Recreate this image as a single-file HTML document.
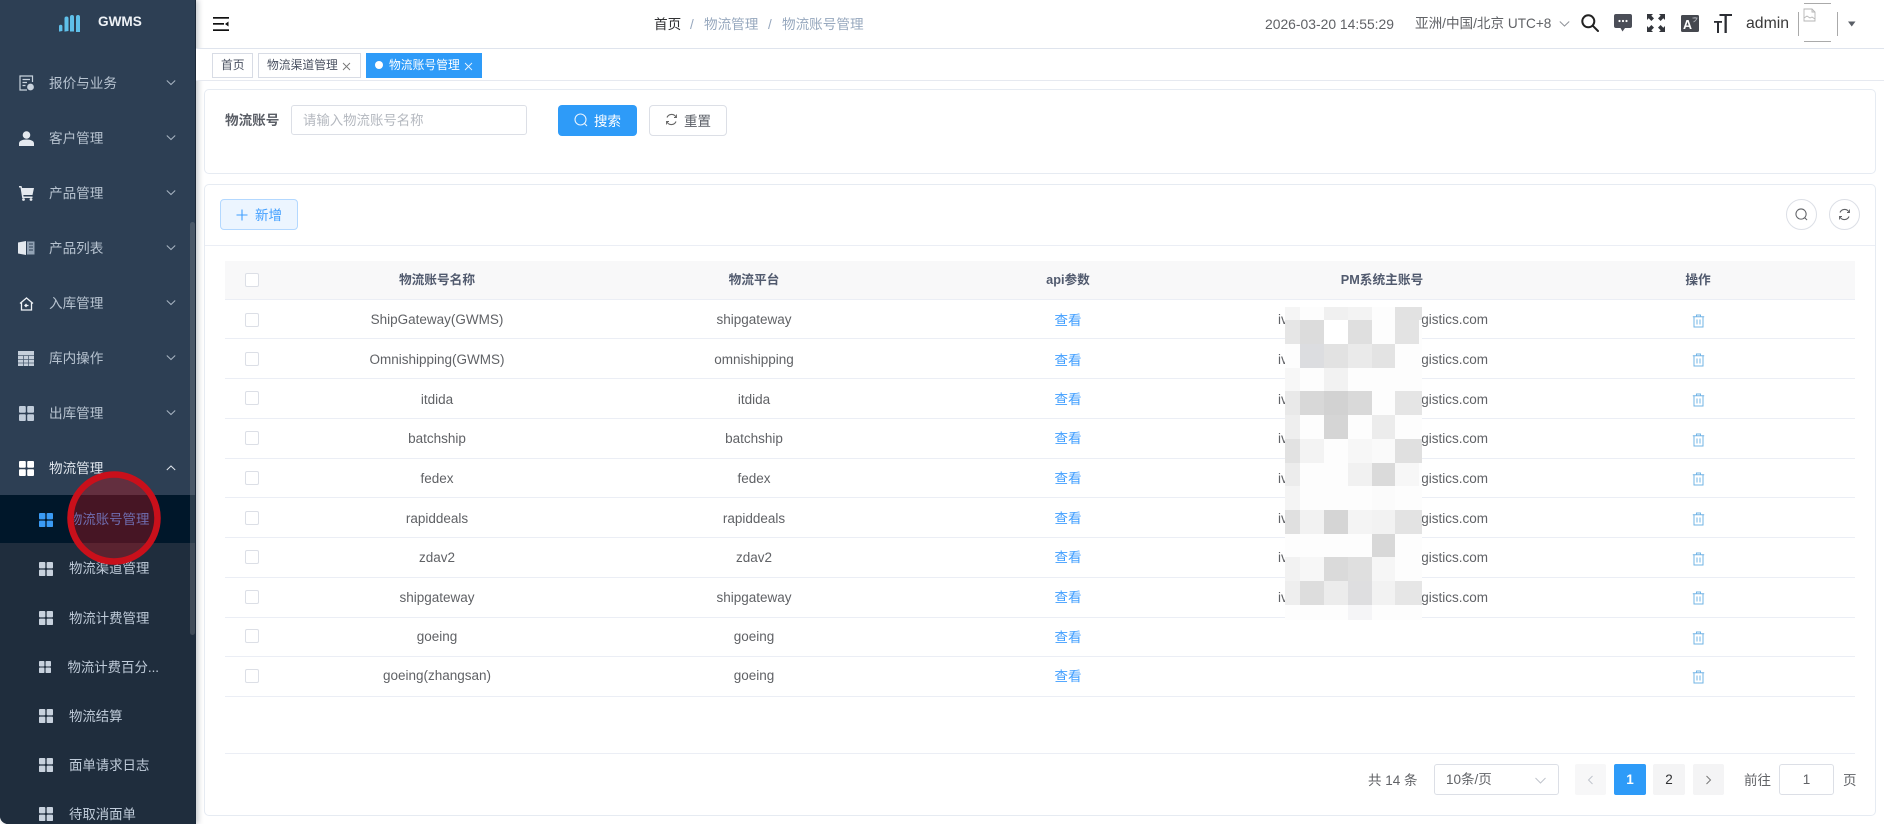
<!DOCTYPE html>
<html lang="zh"><head><meta charset="utf-8"><title>物流账号管理</title>
<style>
*{box-sizing:border-box}
html{background:#fff}
html,body{margin:0;padding:0;width:1884px;height:824px;overflow:hidden;font-family:"Liberation Sans","Noto Sans CJK SC",sans-serif;color:#606266}
body{background:#fff;filter:blur(.35px)}
.a{position:absolute;white-space:nowrap}
#side{position:absolute;left:0;top:0;width:196px;height:824px;background:#2d3f54;border-bottom-left-radius:8px;overflow:hidden;box-shadow:2px 0 6px rgba(0,21,41,.25)}
#nav{position:absolute;left:0;top:1px;width:196px;height:824px}
.m{position:absolute;left:49px;font-size:13.6px;line-height:20px;color:#b7c3d0}
.s{position:absolute;left:69px;font-size:13.4px;line-height:20px;color:#bfcbd9}
.ic{position:absolute}
.card{position:absolute;left:204px;width:1672px;background:#fff;border:1px solid #e6ebf2;border-radius:5px}
.tag{position:absolute;top:53px;height:25px;background:#fff;border:1px solid #d8dce5;font-size:11.8px;line-height:23px;color:#495060}
.row{position:absolute;left:225px;width:1630px;height:1px;background:#ebeef5}
.cb{position:absolute;left:245px;width:14px;height:14px;border:1px solid #dcdfe6;border-radius:2px;background:#fff}
.c{position:absolute;line-height:20px;font-size:13.5px;color:#606266;text-align:center;white-space:nowrap}
.n{left:287px;width:300px}.p{left:604px;width:300px}.v{left:1018px;width:100px;color:#409eff}
.th{position:absolute;top:270px;line-height:20px;font-size:12.7px;font-weight:bold;color:#515a6e;text-align:center;white-space:nowrap}
.pg{position:absolute;top:764px;height:31px;border-radius:2px;background:#f4f4f5;text-align:center;line-height:31px;font-size:13.5px;color:#606266}
</style></head><body>

<div id="side">
<div class="a" style="left:0;top:543px;width:196px;height:281px;background:#1f2d3d"></div>
<div class="a" style="left:0;top:495px;width:196px;height:48px;background:#00172a"></div>
<div class="a" style="left:195px;top:0;width:1px;height:824px;background:#1b2838"></div>

<svg class="ic" style="left:59px;top:15px" width="22" height="17" viewBox="0 0 22 17"><g fill="#5fc0ea"><path d="M0 11.500a1.700 1.700 0 0 1 3.400 0V16l-3.400.6z"/><path d="M5.500 3.500a2 2 0 0 1 4 0V16l-4 .6z"/><path d="M11 2a2 2 0 0 1 4 0V16.500h-4z"/><path d="M17 2a2 2 0 0 1 4 0V17h-4z"/></g></svg>
<div class="a" style="left:98px;top:12px;line-height:20px;font-size:13.6px;font-weight:bold;color:#eef2f6">GWMS</div>

<div id="nav">
<svg class="ic" style="left:19px;top:74px" width="15" height="16" viewBox="0 0 15 16" fill="none" stroke="#c9d3de" stroke-width="1.2"><path d="M13.5 7V1H1v14h7"/><path d="M3.5 4.5h7.5M3.5 7.5h4.500M3.5 10.5h3"/><circle cx="11.5" cy="12" r="2.8" fill="#c9d3de"/></svg>
<div class="m" style="top:73px">报价与业务</div>

<svg class="ic" style="left:19px;top:130px" width="15" height="15" viewBox="0 0 15 15" fill="#e4e9ef"><circle cx="7.5" cy="4" r="3.8"/><path d="M0 15v-2.5C0 10 3 8.5 7.5 8.5S15 10 15 12.5V15z"/></svg>
<div class="m" style="top:128px">客户管理</div>

<svg class="ic" style="left:19px;top:185px" width="15" height="15" viewBox="0 0 15 15" fill="#e4e9ef"><path d="M0 0h2.5l.6 2H15l-1.5 7H4.300l.3 1.500H13.500V12H3.200L1.500 1.500H0z"/><circle cx="4.500" cy="13.500" r="1.400"/><circle cx="12" cy="13.500" r="1.400"/></svg>
<div class="m" style="top:183px">产品管理</div>

<svg class="ic" style="left:18px;top:240px" width="17" height="14" viewBox="0 0 17 14"><path d="M0 1.500L8 0v14L0 12.500z" fill="#e4e9ef"/><path d="M9 0.500h7.500v13H9z" fill="#93a3b5"/><path d="M11 3h4M11 6h4M11 9h4" stroke="#2d3f54"/></svg>
<div class="m" style="top:238px">产品列表</div>

<svg class="ic" style="left:19px;top:296px" width="15" height="14" viewBox="0 0 15 14" fill="none" stroke="#eef2f6" stroke-width="1.300"><path d="M1 6.500L7.500 1 14 6.500"/><path d="M2.500 5.500V13h10V5.500"/><path d="M9.500 8.500H6M7.500 7L6 8.500 7.500 10"/></svg>
<div class="m" style="top:293px">入库管理</div>

<svg class="ic" style="left:18px;top:350px" width="16" height="15" viewBox="0 0 16 15"><rect width="16" height="15" fill="#c5cfdb"/><path d="M0 4.500h16M0 8.500h16M0 12h16M5.500 4.500V15M10.500 4.500V15" stroke="#4b5d72" stroke-width=".8"/></svg>
<div class="m" style="top:348px">库内操作</div>

<svg class="ic" style="left:19px;top:405px" width="15" height="15" viewBox="0 0 15 15" fill="#c0ccda"><rect width="6.800" height="6.800" rx="1"/><rect x="8.200" width="6.800" height="6.800" rx="1"/><rect y="8.200" width="6.800" height="6.800" rx="1"/><rect x="8.200" y="8.200" width="6.800" height="6.800" rx="1"/></svg>
<div class="m" style="top:403px">出库管理</div>

<svg class="ic" style="left:19px;top:460px" width="15" height="15" viewBox="0 0 15 15" fill="#fff"><rect width="6.800" height="6.800" rx="1"/><rect x="8.200" width="6.800" height="6.800" rx="1"/><rect y="8.200" width="6.800" height="6.800" rx="1"/><rect x="8.200" y="8.200" width="6.800" height="6.800" rx="1"/></svg>
<div class="m" style="top:458px;color:#dfe5ec">物流管理</div>

<svg class="ic" style="left:166px;top:78px" width="10" height="8" viewBox="0 0 10 8" fill="none" stroke="#a8b5c3"><path d="M.8 1.500L5 5.500 9.200 1.500"/></svg>
<svg class="ic" style="left:166px;top:133px" width="10" height="8" viewBox="0 0 10 8" fill="none" stroke="#a8b5c3"><path d="M.8 1.500L5 5.500 9.200 1.500"/></svg>
<svg class="ic" style="left:166px;top:188px" width="10" height="8" viewBox="0 0 10 8" fill="none" stroke="#a8b5c3"><path d="M.8 1.500L5 5.500 9.200 1.500"/></svg>
<svg class="ic" style="left:166px;top:243px" width="10" height="8" viewBox="0 0 10 8" fill="none" stroke="#a8b5c3"><path d="M.8 1.500L5 5.500 9.200 1.500"/></svg>
<svg class="ic" style="left:166px;top:298px" width="10" height="8" viewBox="0 0 10 8" fill="none" stroke="#a8b5c3"><path d="M.8 1.500L5 5.500 9.200 1.500"/></svg>
<svg class="ic" style="left:166px;top:353px" width="10" height="8" viewBox="0 0 10 8" fill="none" stroke="#a8b5c3"><path d="M.8 1.500L5 5.500 9.200 1.500"/></svg>
<svg class="ic" style="left:166px;top:408px" width="10" height="8" viewBox="0 0 10 8" fill="none" stroke="#a8b5c3"><path d="M.8 1.500L5 5.500 9.200 1.500"/></svg>
<svg class="ic" style="left:166px;top:463px" width="10" height="8" viewBox="0 0 10 8" fill="none" stroke="#dfe5ec"><path d="M.8 6L5 2 9.200 6"/></svg>

<svg class="ic" style="left:39px;top:512px" width="14" height="14" viewBox="0 0 15 15" fill="#3a9bf4"><rect width="6.800" height="6.800" rx="1"/><rect x="8.200" width="6.800" height="6.800" rx="1"/><rect y="8.200" width="6.800" height="6.800" rx="1"/><rect x="8.200" y="8.200" width="6.800" height="6.800" rx="1"/></svg>
<div class="s" style="top:509px;color:#409eff">物流账号管理</div>

<svg class="ic" style="left:39px;top:561px" width="14" height="14" viewBox="0 0 15 15" fill="#c8d2de"><rect width="6.800" height="6.800" rx="1"/><rect x="8.200" width="6.800" height="6.800" rx="1"/><rect y="8.200" width="6.800" height="6.800" rx="1"/><rect x="8.200" y="8.200" width="6.800" height="6.800" rx="1"/></svg>
<div class="s" style="top:558px">物流渠道管理</div>

<svg class="ic" style="left:39px;top:610px" width="14" height="14" viewBox="0 0 15 15" fill="#c8d2de"><rect width="6.800" height="6.800" rx="1"/><rect x="8.200" width="6.800" height="6.800" rx="1"/><rect y="8.200" width="6.800" height="6.800" rx="1"/><rect x="8.200" y="8.200" width="6.800" height="6.800" rx="1"/></svg>
<div class="s" style="top:608px">物流计费管理</div>

<svg class="ic" style="left:39px;top:660px" width="12" height="12" viewBox="0 0 15 15" fill="#c8d2de"><rect width="6.800" height="6.800" rx="1"/><rect x="8.200" width="6.800" height="6.800" rx="1"/><rect y="8.200" width="6.800" height="6.800" rx="1"/><rect x="8.200" y="8.200" width="6.800" height="6.800" rx="1"/></svg>
<div class="s" style="top:657px;left:67.500px">物流计费百分...</div>

<svg class="ic" style="left:39px;top:708px" width="14" height="14" viewBox="0 0 15 15" fill="#c8d2de"><rect width="6.800" height="6.800" rx="1"/><rect x="8.200" width="6.800" height="6.800" rx="1"/><rect y="8.200" width="6.800" height="6.800" rx="1"/><rect x="8.200" y="8.200" width="6.800" height="6.800" rx="1"/></svg>
<div class="s" style="top:706px">物流结算</div>

<svg class="ic" style="left:39px;top:757px" width="14" height="14" viewBox="0 0 15 15" fill="#c8d2de"><rect width="6.800" height="6.800" rx="1"/><rect x="8.200" width="6.800" height="6.800" rx="1"/><rect y="8.200" width="6.800" height="6.800" rx="1"/><rect x="8.200" y="8.200" width="6.800" height="6.800" rx="1"/></svg>
<div class="s" style="top:755px">面单请求日志</div>

<svg class="ic" style="left:39px;top:806px" width="14" height="14" viewBox="0 0 15 15" fill="#c8d2de"><rect width="6.800" height="6.800" rx="1"/><rect x="8.200" width="6.800" height="6.800" rx="1"/><rect y="8.200" width="6.800" height="6.800" rx="1"/><rect x="8.200" y="8.200" width="6.800" height="6.800" rx="1"/></svg>
<div class="s" style="top:804px">待取消面单</div>
</div>

<div class="a" style="left:190px;top:222px;width:5px;height:413px;background:rgba(144,147,153,.3);border-radius:3px"></div>
</div>

<!-- header -->
<svg class="ic" style="left:213px;top:17px" width="16" height="14" viewBox="0 0 16 14"><rect width="16" height="1.700" fill="#111"/><rect y="6" width="11" height="1.700" fill="#111"/><rect y="12.300" width="16" height="1.700" fill="#111"/><path d="M15.500 4.500v5L12 7z" fill="#111"/></svg>
<div class="a" style="left:654px;top:15px;line-height:20px;font-size:13.6px;color:#303133">首页</div>
<div class="a" style="left:690px;top:15px;line-height:20px;font-size:13.6px;color:#97a8be">/</div>
<div class="a" style="left:704px;top:15px;line-height:20px;font-size:13.6px;color:#97a8be">物流管理</div>
<div class="a" style="left:768px;top:15px;line-height:20px;font-size:13.6px;color:#97a8be">/</div>
<div class="a" style="left:782px;top:15px;line-height:20px;font-size:13.6px;color:#97a8be">物流账号管理</div>

<div class="a" style="left:1265px;top:14px;line-height:20px;font-size:13.900px;color:#606266">2026-03-20 14:55:29</div>
<div class="a" style="left:1415px;top:14px;line-height:20px;font-size:13.600px;color:#606266">亚洲/中国/北京 UTC+8</div>
<svg class="ic" style="left:1559px;top:20px" width="11" height="8" viewBox="0 0 11 8" fill="none" stroke="#909399"><path d="M.8 1.500L5.500 6 10.200 1.500"/></svg>

<svg class="ic" style="left:1581px;top:14px" width="18" height="18" viewBox="0 0 18 18" fill="none" stroke="#222" stroke-width="2"><circle cx="7.300" cy="7.300" r="6"/><path d="M11.700 11.700L17 17" stroke-linecap="round"/></svg>
<svg class="ic" style="left:1614px;top:14px" width="18" height="18" viewBox="0 0 18 18"><path d="M2 0h14a2 2 0 0 1 2 2v10a2 2 0 0 1-2 2h-5l-2.500 3.500L6.500 14H2a2 2 0 0 1-2-2V2a2 2 0 0 1 2-2z" fill="#4b4e58"/><circle cx="5.500" cy="7" r="1.100" fill="#fff"/><circle cx="9" cy="7" r="1.100" fill="#fff"/><circle cx="12.500" cy="7" r="1.100" fill="#fff"/></svg>
<svg class="ic" style="left:1647px;top:14px" width="18" height="18" viewBox="0 0 18 18" fill="#33363c"><path d="M0 0h6L4.300 1.700 7 4.400 4.400 7 1.700 4.300 0 6zM18 0v6l-1.700-1.700L13.600 7 11 4.400l2.700-2.700L12 0zM0 18v-6l1.700 1.700L4.400 11 7 13.600l-2.700 2.700L6 18zM18 18h-6l1.700-1.700L11 13.600l2.600-2.600 2.700 2.700L18 12z"/></svg>
<svg class="ic" style="left:1681px;top:15px" width="18" height="17" viewBox="0 0 18 17"><rect width="18" height="17" rx="1.500" fill="#45484f"/><text x="2" y="14" font-size="12.500" font-weight="bold" fill="#fff" font-family="Liberation Sans">A</text><path d="M11.500 3h5M14 2v1M12.500 7c2 -1 3 -2.500 3.500 -4" stroke="#a9acb3" stroke-width=".9" fill="none"/></svg>
<svg class="ic" style="left:1714px;top:14px" width="18" height="19" viewBox="0 0 18 19" fill="#2b2d33"><rect x="5.500" y="0" width="12.500" height="2"/><rect x="10.500" y="0" width="2.300" height="19"/><rect x="0" y="7" width="8" height="1.800"/><rect x="3" y="7" width="2" height="12"/></svg>
<div class="a" style="left:1746px;top:14px;line-height:20px;font-size:15.800px;color:#3a3a3a">admin</div>
<div class="a" style="left:1798px;top:12px;width:1px;height:24px;background:#aaa"></div>
<div class="a" style="left:1837px;top:12px;width:1px;height:24px;background:#aaa"></div>
<div class="a" style="left:1804px;top:3px;width:27px;height:1px;background:#aaa"></div>
<div class="a" style="left:1804px;top:41px;width:27px;height:1px;background:#aaa"></div>
<svg class="ic" style="left:1803px;top:8px" width="13" height="14" viewBox="0 0 13 14" fill="none" stroke="#b5b5b5" stroke-width=".9"><path d="M1 1h8l3 3v9H1z"/><path d="M9 1v3h3M1 10l3-2 3 2 2-1 3 2"/></svg>
<svg class="ic" style="left:1848px;top:21px" width="8" height="6" viewBox="0 0 8 6"><path d="M0 .5h7.500L3.750 5.500z" fill="#5a5e66"/></svg>

<div class="a" style="left:196px;top:48px;width:1688px;height:33px;background:#fff;border-top:1px solid #dfe4ed;border-bottom:1px solid #e6e9f0"></div>

<div class="tag" style="left:212px;width:41px;padding-left:8px">首页</div>
<div class="tag" style="left:258px;width:103px;padding-left:8px">物流渠道管理</div>
<svg class="ic" style="left:342px;top:62px" width="9" height="9" viewBox="0 0 9 9" stroke="#777" stroke-width=".9"><path d="M1 1l7 7M8 1l-7 7"/></svg>
<div class="tag" style="left:366px;width:116px;background:#2e9bf8;border-color:#2e9bf8;color:#fff;padding-left:22px">物流账号管理</div>
<div class="a" style="left:375px;top:61px;width:8px;height:8px;border-radius:50%;background:#fff"></div>
<svg class="ic" style="left:464px;top:62px" width="9" height="9" viewBox="0 0 9 9" stroke="#e8f3fe" stroke-width=".9"><path d="M1 1l7 7M8 1l-7 7"/></svg>

<!-- search card -->
<div class="card" style="top:89px;height:85px"></div>
<div class="a" style="left:225px;top:111px;line-height:20px;font-size:13.600px;font-weight:bold;color:#5a5e66">物流账号</div>
<div class="a" style="left:291px;top:105px;width:236px;height:30px;border:1px solid #dcdfe6;border-radius:3px;background:#fff;padding-left:11px;padding-top:1px;font-size:13.400px;line-height:28px;color:#b4b8bf">请输入物流账号名称</div>
<div class="a" style="left:558px;top:105px;width:79px;height:31px;background:#2e9bf8;border-radius:4px"></div>
<svg class="ic" style="left:574px;top:113px" width="14" height="14" viewBox="0 0 14 14" fill="none" stroke="#e8f3fe" stroke-width="1.100"><circle cx="6.500" cy="6.500" r="5.500"/><path d="M10.500 10.500L13 13"/></svg>
<div class="a" style="left:594px;top:112px;line-height:20px;font-size:13.500px;color:#fff">搜索</div>
<div class="a" style="left:649px;top:105px;width:78px;height:31px;background:#fff;border:1px solid #dcdfe6;border-radius:4px"></div>
<svg class="ic" style="left:665px;top:113px" width="13" height="13" viewBox="0 0 13 13" fill="none" stroke="#666" stroke-width="1.100"><path d="M2 4.500A5 5 0 0 1 11 4M11 8.500A5 5 0 0 1 2 9"/><path d="M11.500 1.500V4.500H9" stroke-width=".9"/><path d="M1.500 11.500V8.500H4" stroke-width=".9"/></svg>
<div class="a" style="left:684px;top:112px;line-height:20px;font-size:13.500px;color:#5a5e66">重置</div>

<!-- table card -->
<div class="card" style="top:184px;height:632px"></div>
<div class="a" style="left:220px;top:199px;width:78px;height:31px;background:#ecf5ff;border:1px solid #b3d8ff;border-radius:4px"></div>
<svg class="ic" style="left:236px;top:209px" width="12" height="12" viewBox="0 0 12 12" stroke="#409eff" stroke-width="1.100"><path d="M6 .5v11M.5 6h11"/></svg>
<div class="a" style="left:255px;top:206px;line-height:20px;font-size:13.500px;color:#409eff">新增</div>
<div class="a" style="left:205px;top:245px;width:1670px;height:1px;background:#ebeef5"></div>

<div class="a" style="left:1786px;top:199px;width:31px;height:31px;border:1px solid #dcdfe6;border-radius:50%"></div>
<svg class="ic" style="left:1795px;top:208px" width="13" height="13" viewBox="0 0 14 14" fill="none" stroke="#606266" stroke-width="1.100"><circle cx="6.500" cy="6.500" r="5.500"/><path d="M10.500 10.500L13 13"/></svg>
<div class="a" style="left:1829px;top:199px;width:31px;height:31px;border:1px solid #dcdfe6;border-radius:50%"></div>
<svg class="ic" style="left:1838px;top:208px" width="13" height="13" viewBox="0 0 13 13" fill="none" stroke="#606266" stroke-width="1.100"><path d="M2 4.500A5 5 0 0 1 11 4M11 8.500A5 5 0 0 1 2 9"/><path d="M11.500 1.500V4.500H9" stroke-width=".9"/><path d="M1.500 11.500V8.500H4" stroke-width=".9"/></svg>

<div class="a" style="left:225px;top:261px;width:1630px;height:38px;background:#f8f8f9"></div>
<div class="row" style="top:299px"></div><div class="row" style="top:338px"></div><div class="row" style="top:378px"></div><div class="row" style="top:418px"></div><div class="row" style="top:458px"></div><div class="row" style="top:497px"></div><div class="row" style="top:537px"></div><div class="row" style="top:577px"></div><div class="row" style="top:617px"></div><div class="row" style="top:656px"></div><div class="row" style="top:696px"></div><div class="row" style="top:753px"></div>

<div class="cb" style="top:273px"></div>
<div class="th" style="left:287px;width:300px">物流账号名称</div>
<div class="th" style="left:604px;width:300px">物流平台</div>
<div class="th" style="left:1018px;width:100px">api参数</div>
<div class="th" style="left:1232px;width:300px">PM系统主账号</div>
<div class="th" style="left:1648px;width:100px">操作</div>

<div class="cb" style="top:313px"></div><div class="c n" style="top:310px">ShipGateway(GWMS)</div><div class="c p" style="top:310px">shipgateway</div><div class="c v" style="top:311px">查看</div>
<div class="cb" style="top:352px"></div><div class="c n" style="top:350px">Omnishipping(GWMS)</div><div class="c p" style="top:350px">omnishipping</div><div class="c v" style="top:351px">查看</div>
<div class="cb" style="top:391px"></div><div class="c n" style="top:390px">itdida</div><div class="c p" style="top:390px">itdida</div><div class="c v" style="top:390px">查看</div>
<div class="cb" style="top:431px"></div><div class="c n" style="top:429px">batchship</div><div class="c p" style="top:429px">batchship</div><div class="c v" style="top:429px">查看</div>
<div class="cb" style="top:471px"></div><div class="c n" style="top:469px">fedex</div><div class="c p" style="top:469px">fedex</div><div class="c v" style="top:469px">查看</div>
<div class="cb" style="top:511px"></div><div class="c n" style="top:509px">rapiddeals</div><div class="c p" style="top:509px">rapiddeals</div><div class="c v" style="top:509px">查看</div>
<div class="cb" style="top:550px"></div><div class="c n" style="top:548px">zdav2</div><div class="c p" style="top:548px">zdav2</div><div class="c v" style="top:548px">查看</div>
<div class="cb" style="top:590px"></div><div class="c n" style="top:588px">shipgateway</div><div class="c p" style="top:588px">shipgateway</div><div class="c v" style="top:588px">查看</div>
<div class="cb" style="top:629px"></div><div class="c n" style="top:627px">goeing</div><div class="c p" style="top:627px">goeing</div><div class="c v" style="top:628px">查看</div>
<div class="cb" style="top:669px"></div><div class="c n" style="top:666px">goeing(zhangsan)</div><div class="c p" style="top:666px">goeing</div><div class="c v" style="top:667px">查看</div>

<div class="c" style="left:1278px;top:310px">iv</div><div class="c" style="left:1278px;top:350px">iv</div><div class="c" style="left:1278px;top:390px">iv</div><div class="c" style="left:1278px;top:429px">iv</div><div class="c" style="left:1278px;top:469px">iv</div><div class="c" style="left:1278px;top:509px">iv</div><div class="c" style="left:1278px;top:548px">iv</div><div class="c" style="left:1278px;top:588px">iv</div>
<div class="c" style="left:1388px;width:100px;text-align:right;top:310px">gistics.com</div>
<div class="c" style="left:1388px;width:100px;text-align:right;top:350px">gistics.com</div>
<div class="c" style="left:1388px;width:100px;text-align:right;top:390px">gistics.com</div>
<div class="c" style="left:1388px;width:100px;text-align:right;top:429px">gistics.com</div>
<div class="c" style="left:1388px;width:100px;text-align:right;top:469px">gistics.com</div>
<div class="c" style="left:1388px;width:100px;text-align:right;top:509px">gistics.com</div>
<div class="c" style="left:1388px;width:100px;text-align:right;top:548px">gistics.com</div>
<div class="c" style="left:1388px;width:100px;text-align:right;top:588px">gistics.com</div>

<!-- mosaic -->
<svg class="ic" style="left:1285px;top:307px" width="137" height="313" viewBox="0 0 137 313" shape-rendering="crispEdges">
<rect width="137" height="313" fill="#fdfdfd"/>
<g fill="#f5f5f5"><rect x="0" y="0" width="15" height="13"/></g>
<rect x="39" y="0" width="24" height="13" fill="#f0f0f0"/><rect x="63" y="0" width="24" height="13" fill="#f3f3f3"/><rect x="110" y="0" width="27" height="13" fill="#e2e2e2"/>
<rect x="0" y="13" width="15" height="24" fill="#e6e6e6"/><rect x="15" y="13" width="24" height="24" fill="#dcdcdc"/><rect x="39" y="13" width="24" height="24" fill="#fff"/><rect x="63" y="13" width="24" height="24" fill="#dfdfdf"/><rect x="110" y="13" width="24" height="24" fill="#e3e3e3"/>
<rect x="15" y="37" width="24" height="24" fill="#dcdde0"/><rect x="39" y="37" width="24" height="24" fill="#e2e2e2"/><rect x="63" y="37" width="24" height="24" fill="#eaeaea"/><rect x="87" y="37" width="23" height="24" fill="#e3e3e3"/>
<rect x="0" y="61" width="15" height="23" fill="#f7f7f7"/><rect x="39" y="61" width="24" height="23" fill="#f2f2f2"/>
<rect x="0" y="84" width="15" height="24" fill="#e9e9e9"/><rect x="15" y="84" width="24" height="24" fill="#d8d8d8"/><rect x="39" y="84" width="24" height="24" fill="#d2d2d2"/><rect x="63" y="84" width="24" height="24" fill="#d9d9d9"/><rect x="110" y="84" width="27" height="24" fill="#e5e5e5"/>
<rect x="0" y="108" width="15" height="24" fill="#eeeeee"/><rect x="39" y="108" width="24" height="24" fill="#d5d5d5"/><rect x="87" y="108" width="23" height="24" fill="#ececec"/>
<rect x="0" y="132" width="15" height="24" fill="#e2e2e2"/><rect x="15" y="132" width="24" height="24" fill="#f3f3f3"/><rect x="63" y="132" width="24" height="24" fill="#f7f7f7"/><rect x="87" y="132" width="23" height="24" fill="#fafafa"/><rect x="110" y="132" width="27" height="24" fill="#e0e0e0"/>
<rect x="0" y="156" width="15" height="23" fill="#ececec"/><rect x="63" y="156" width="24" height="23" fill="#f1f1f1"/><rect x="87" y="156" width="23" height="23" fill="#dadada"/><rect x="110" y="156" width="24" height="23" fill="#f7f7f7"/>
<rect x="0" y="179" width="15" height="24" fill="#f4f4f4"/><rect x="87" y="179" width="23" height="24" fill="#fbfbfb"/>
<rect x="0" y="203" width="15" height="24" fill="#e0e0e0"/><rect x="15" y="203" width="24" height="24" fill="#f2f2f2"/><rect x="39" y="203" width="24" height="24" fill="#d5d5d5"/><rect x="63" y="203" width="24" height="24" fill="#f4f4f4"/><rect x="87" y="203" width="23" height="24" fill="#f2f2f2"/><rect x="110" y="203" width="27" height="24" fill="#e3e3e3"/>
<rect x="87" y="227" width="23" height="23" fill="#d8d8d8"/>
<rect x="0" y="250" width="15" height="24" fill="#f2f2f2"/><rect x="15" y="250" width="24" height="24" fill="#f7f7f7"/><rect x="39" y="250" width="24" height="24" fill="#dadada"/><rect x="63" y="250" width="24" height="24" fill="#dfdfdf"/><rect x="87" y="250" width="23" height="24" fill="#f6f6f6"/>
<rect x="0" y="274" width="15" height="24" fill="#eeeeee"/><rect x="15" y="274" width="24" height="24" fill="#dddddd"/><rect x="39" y="274" width="24" height="24" fill="#ececec"/><rect x="63" y="274" width="24" height="24" fill="#dedee0"/><rect x="87" y="274" width="23" height="24" fill="#f2f2f2"/><rect x="110" y="274" width="27" height="24" fill="#e6e6e6"/>
<rect x="63" y="298" width="24" height="15" fill="#f5f5f7"/>
</svg>

<!-- trash icons -->
<svg class="ic" style="left:1692px;top:314px" width="13" height="14" viewBox="0 0 13 14" fill="none" stroke="#72b4e6" stroke-width="1"><path d="M.8 2.800h11.400M4.500 2.800V1h4v1.800M2 2.800V13h9V2.800M5 5.500v5M8 5.500v5"/></svg>
<svg class="ic" style="left:1692px;top:353px" width="13" height="14" viewBox="0 0 13 14" fill="none" stroke="#72b4e6" stroke-width="1"><path d="M.8 2.800h11.400M4.500 2.800V1h4v1.800M2 2.800V13h9V2.800M5 5.500v5M8 5.500v5"/></svg>
<svg class="ic" style="left:1692px;top:393px" width="13" height="14" viewBox="0 0 13 14" fill="none" stroke="#72b4e6" stroke-width="1"><path d="M.8 2.800h11.400M4.500 2.800V1h4v1.800M2 2.800V13h9V2.800M5 5.500v5M8 5.500v5"/></svg>
<svg class="ic" style="left:1692px;top:433px" width="13" height="14" viewBox="0 0 13 14" fill="none" stroke="#72b4e6" stroke-width="1"><path d="M.8 2.800h11.400M4.500 2.800V1h4v1.800M2 2.800V13h9V2.800M5 5.500v5M8 5.500v5"/></svg>
<svg class="ic" style="left:1692px;top:472px" width="13" height="14" viewBox="0 0 13 14" fill="none" stroke="#72b4e6" stroke-width="1"><path d="M.8 2.800h11.400M4.500 2.800V1h4v1.800M2 2.800V13h9V2.800M5 5.500v5M8 5.500v5"/></svg>
<svg class="ic" style="left:1692px;top:512px" width="13" height="14" viewBox="0 0 13 14" fill="none" stroke="#72b4e6" stroke-width="1"><path d="M.8 2.800h11.400M4.500 2.800V1h4v1.800M2 2.800V13h9V2.800M5 5.500v5M8 5.500v5"/></svg>
<svg class="ic" style="left:1692px;top:552px" width="13" height="14" viewBox="0 0 13 14" fill="none" stroke="#72b4e6" stroke-width="1"><path d="M.8 2.800h11.400M4.500 2.800V1h4v1.800M2 2.800V13h9V2.800M5 5.500v5M8 5.500v5"/></svg>
<svg class="ic" style="left:1692px;top:591px" width="13" height="14" viewBox="0 0 13 14" fill="none" stroke="#72b4e6" stroke-width="1"><path d="M.8 2.800h11.400M4.500 2.800V1h4v1.800M2 2.800V13h9V2.800M5 5.500v5M8 5.500v5"/></svg>
<svg class="ic" style="left:1692px;top:631px" width="13" height="14" viewBox="0 0 13 14" fill="none" stroke="#72b4e6" stroke-width="1"><path d="M.8 2.800h11.400M4.500 2.800V1h4v1.800M2 2.800V13h9V2.800M5 5.500v5M8 5.500v5"/></svg>
<svg class="ic" style="left:1692px;top:670px" width="13" height="14" viewBox="0 0 13 14" fill="none" stroke="#72b4e6" stroke-width="1"><path d="M.8 2.800h11.400M4.500 2.800V1h4v1.800M2 2.800V13h9V2.800M5 5.500v5M8 5.500v5"/></svg>

<!-- pagination -->
<div class="a" style="left:1368px;top:771px;line-height:20px;font-size:13.500px;color:#606266">共 14 条</div>
<div class="a" style="left:1434px;top:764px;width:125px;height:31px;border:1px solid #dcdfe6;border-radius:3px;padding-left:11px;line-height:29px;font-size:13.500px;color:#606266">10条/页</div>
<svg class="ic" style="left:1535px;top:777px" width="11" height="7" viewBox="0 0 11 7" fill="none" stroke="#c0c4cc"><path d="M.5 1L5.500 6 10.500 1"/></svg>
<div class="pg" style="left:1575px;width:31px;background:#f7f7f8"></div>
<svg class="ic" style="left:1587px;top:775px" width="7" height="10" viewBox="0 0 7 10" fill="none" stroke="#c0c4cc"><path d="M5.500 1L1.500 5l4 4"/></svg>
<div class="pg" style="left:1614px;width:32px;background:#2e9bf8;color:#fff;font-weight:bold">1</div>
<div class="pg" style="left:1653px;width:32px;color:#303133">2</div>
<div class="pg" style="left:1693px;width:31px"></div>
<svg class="ic" style="left:1705px;top:775px" width="7" height="10" viewBox="0 0 7 10" fill="none" stroke="#777"><path d="M1.500 1l4 4-4 4"/></svg>
<div class="a" style="left:1744px;top:771px;line-height:20px;font-size:13.500px;color:#606266">前往</div>
<div class="a" style="left:1779px;top:764px;width:55px;height:31px;border:1px solid #dcdfe6;border-radius:3px;text-align:center;line-height:29px;font-size:13.500px;color:#606266">1</div>
<div class="a" style="left:1843px;top:771px;line-height:20px;font-size:13.500px;color:#606266">页</div>

<!-- red circle annotation -->
<svg class="ic" style="left:60px;top:466px" width="108" height="104" viewBox="0 0 108 104"><circle cx="54" cy="52" r="43.500" fill="rgba(200,16,26,.35)" stroke="#c9101b" stroke-width="6.500"/></svg>
</body></html>
